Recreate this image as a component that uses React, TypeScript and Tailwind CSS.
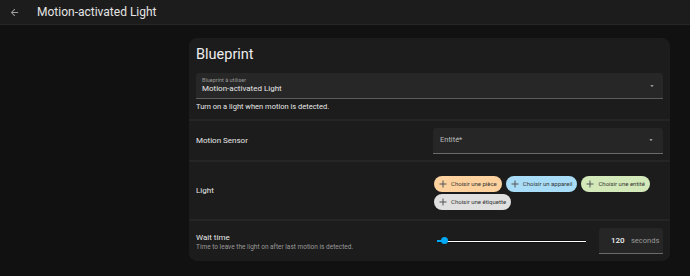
import React from "react";

function Caret() {
  return (
    <svg width="8" height="8" viewBox="0 0 24 24" className="text-[#bdbdbd]">
      <path d="M7 10l5 5 5-5z" fill="currentColor" />
    </svg>
  );
}

function Plus() {
  return (
    <svg width="8" height="8" viewBox="0 0 8 8">
      <path d="M4 0.5v7M0.5 4h7" stroke="#555555" strokeWidth="1" fill="none" />
    </svg>
  );
}

function App() {
  const chips = [
    { label: "Choisir une pièce", bg: "bg-[#fdd29f]" },
    { label: "Choisir un appareil", bg: "bg-[#a9ddf7]" },
    { label: "Choisir une entité", bg: "bg-[#d4e9ba]" },
    { label: "Choisir une étiquette", bg: "bg-[#e0e0e0]" },
  ];

  return (
    <div className="w-[690px] h-[276px] overflow-hidden bg-[#111111] font-['Roboto',sans-serif]">
      <div className="h-[25px] bg-[#1c1c1c] border-b border-[#262626] flex items-center">
        <div className="w-[37px] flex justify-center pr-[8px]">
          <svg width="11" height="11" viewBox="0 0 24 24">
            <path
              d="M20 11H7.83l5.59-5.59L12 4l-8 8 8 8 1.41-1.41L7.83 13H20v-2z"
              fill="#9e9e9e"
            />
          </svg>
        </div>
        <span className="text-[12px] text-[#e4e4e4]">Motion-activated Light</span>
      </div>

      <div className="pt-[13px] pl-[189px]">
        <div className="w-[481px] h-[223px] rounded-[8px] bg-[#1c1c1c] flex flex-col">
          <div className="px-[7px] pt-[8px]">
            <div className="text-[14.5px] leading-[18px] text-[#eeeeee]">Blueprint</div>
            <div className="mt-[9px] h-[26px] bg-[#272727] rounded-t-[3px] border-b border-[#5c5c5c] flex items-center pl-[6px] pr-[7px]">
              <div className="flex-1 flex flex-col">
                <span className="text-[5.5px] leading-[7px] text-[#9a9a9a]">Blueprint à utiliser</span>
                <span className="text-[8px] leading-[10px] text-[#e6e6e6]">Motion-activated Light</span>
              </div>
              <Caret />
            </div>
            <div className="mt-[3px] text-[7.5px] leading-[10px] text-[#e6e6e6]">
              Turn on a light when motion is detected.
            </div>
          </div>

          <div className="mt-[7px] h-[41px] border-t-[2px] border-[#252525] flex items-center px-[7px]">
            <div className="flex-1 text-[8px] text-[#e6e6e6]">Motion Sensor</div>
            <div className="w-[230px] h-[26px] bg-[#262626] rounded-t-[3px] border-b border-[#6a6a6a] flex items-center pl-[7px] pr-[8px]">
              <span className="flex-1 text-[7.5px] text-[#bdbdbd]">Entité*</span>
              <Caret />
            </div>
          </div>

          <div className="h-[59px] border-t-[2px] border-[#252525] flex items-center px-[7px]">
            <div className="flex-1 text-[8px] text-[#e6e6e6]">Light</div>
            <div className="w-[229px] flex flex-wrap gap-x-[4px] gap-y-[2px] pt-[4px]">
              {chips.map((c) => (
                <div
                  key={c.label}
                  className={`${c.bg} h-[16px] rounded-full flex items-center pl-[5px] pr-[5px] gap-[4px]`}
                >
                  <Plus />
                  <span className="text-[6px] text-[#333333]">{c.label}</span>
                </div>
              ))}
            </div>
          </div>

          <div className="flex-1 border-t-[2px] border-[#252525] flex items-center px-[7px]">
            <div className="flex-1 flex flex-col pt-[2px]">
              <span className="text-[8px] leading-[10px] text-[#e6e6e6]">Wait time</span>
              <span className="text-[6.5px] leading-[9px] text-[#9a9a9a]">
                Time to leave the light on after last motion is detected.
              </span>
            </div>
            <div className="w-[150px] h-[8px] flex items-center relative mr-[12px]">
              <div className="w-full h-[3px] bg-white border border-[#111111] rounded-[1px]"></div>
              <div className="absolute left-[0px] top-[3px] w-[7px] h-[2px] bg-[#03a9f4]"></div>
              <div className="absolute left-[4px] top-[0px] w-[7px] h-[7px] rounded-full bg-[#03a9f4]"></div>
            </div>
            <div className="w-[64px] h-[26px] bg-[#262626] rounded-t-[3px] border-b border-[#6a6a6a] flex items-center pl-[12px]">
              <span className="text-[8px] font-medium text-[#eeeeee] w-[20px]">120</span>
              <span className="text-[7.5px] text-[#9a9a9a]">seconds</span>
            </div>
          </div>
        </div>
      </div>
    </div>
  );
}

export default App;
